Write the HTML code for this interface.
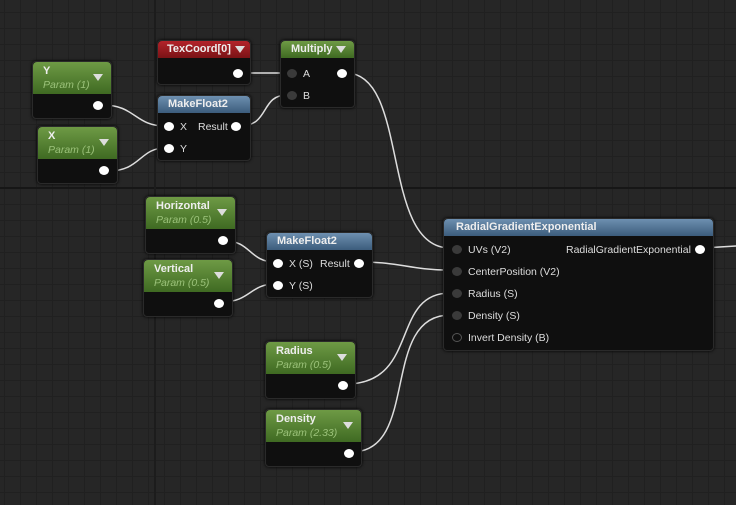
<!DOCTYPE html><html><head><style>
body{margin:0;width:736px;height:505px;overflow:hidden;background:#262626;font-family:"Liberation Sans",sans-serif;position:relative}
.bg{position:absolute;inset:0;background-image:linear-gradient(#202020 1px,transparent 1px),linear-gradient(90deg,#202020 1px,transparent 1px);background-size:16px 16px;background-position:4px 12px}
.n{position:absolute;background:#0f0f0f;border-radius:4px;box-shadow:0 0 3px #000;border:1px solid #2a2a2a}
.h{height:17px;border-radius:4px 4px 0 0;color:#eee;font-size:11px;font-weight:bold;line-height:17px;padding-left:10px;position:relative}
.red{background:linear-gradient(#b3232a,#7a1316)}
.grn{background:linear-gradient(#6e9a45,#3f6a22)}
.blu{background:linear-gradient(#6d8fb0,#3c5c7c)}
.tri{position:absolute;right:8px;top:5px;width:0;height:0;border-left:5px solid transparent;border-right:5px solid transparent;border-top:7px solid #ddd}
.pm{height:32px;line-height:14px;padding-top:2px;box-sizing:border-box}
.pm i{display:block;color:#9bc27a;font-size:10.5px;font-weight:normal}
.t{position:absolute;color:#ddd;font-size:10.5px}
.p{position:absolute;width:10px;height:9px;border-radius:50%;background:#fff}
.e{background:#3a3a3a}
svg{position:absolute;left:0;top:0}
</style></head><body><div class="bg"></div>
<div style="position:absolute;left:0;right:0;top:187px;height:2px;background:#161616"></div>
<div style="position:absolute;top:0;bottom:0;left:154px;width:2px;background:#1c1c1c"></div>
<svg width="736" height="505" fill="none" stroke="#ddd" stroke-width="1.5">
<path d="M243 73 L287 73"/>
<path d="M346 73 C410 73 380 248 450 248"/>
<path d="M103 105 C135 105 135 126 165 126"/>
<path d="M109 171 C140 171 140 148 165 148"/>
<path d="M240 126 C270 126 260 95 287 95"/>
<path d="M226 241 C250 241 250 262 275 262"/>
<path d="M222 302 C250 302 250 284 275 284"/>
<path d="M362 262 C400 262 410 270 450 270"/>
<path d="M346 384 C420 384 390 293 450 293"/>
<path d="M352 452 C420 452 380 315 450 315"/>
<path d="M703 248 L736 246"/>
</svg>
<div class="n" style="left:157px;top:40px;width:92px;height:43px"><div class="h red" style="padding-left:9px">TexCoord[0]<span class="tri" style="right:5px"></span></div><span class="p" style="left:75px;top:28px"></span></div>
<div class="n" style="left:280px;top:40px;width:73px;height:66px"><div class="h grn">Multiply<span class="tri"></span></div><span class="p e" style="left:6px;top:28px"></span><span class="t" style="left:22px;top:27px">A</span><span class="p" style="left:56px;top:28px"></span><span class="p e" style="left:6px;top:50px"></span><span class="t" style="left:22px;top:49px">B</span></div>
<div class="n" style="left:32px;top:61px;width:78px;height:56px"><div class="h grn pm">Y<i>Param (1)</i><span class="tri" style="top:12px"></span></div><span class="p" style="left:60px;top:39px"></span></div>
<div class="n" style="left:37px;top:126px;width:79px;height:56px"><div class="h grn pm">X<i>Param (1)</i><span class="tri" style="top:12px"></span></div><span class="p" style="left:61px;top:39px"></span></div>
<div class="n" style="left:157px;top:95px;width:92px;height:64px"><div class="h blu">MakeFloat2</div><span class="p" style="left:6px;top:26px"></span><span class="t" style="left:22px;top:25px">X</span><span class="t" style="left:40px;top:25px">Result</span><span class="p" style="left:73px;top:26px"></span><span class="p" style="left:6px;top:48px"></span><span class="t" style="left:22px;top:47px">Y</span></div>
<div class="n" style="left:145px;top:196px;width:89px;height:56px"><div class="h grn pm">Horizontal<i>Param (0.5)</i><span class="tri" style="top:12px"></span></div><span class="p" style="left:72px;top:39px"></span></div>
<div class="n" style="left:143px;top:259px;width:88px;height:56px"><div class="h grn pm">Vertical<i>Param (0.5)</i><span class="tri" style="top:12px"></span></div><span class="p" style="left:70px;top:39px"></span></div>
<div class="n" style="left:266px;top:232px;width:105px;height:64px"><div class="h blu">MakeFloat2</div><span class="p" style="left:6px;top:26px"></span><span class="t" style="left:22px;top:25px">X (S)</span><span class="t" style="left:53px;top:25px">Result</span><span class="p" style="left:87px;top:26px"></span><span class="p" style="left:6px;top:48px"></span><span class="t" style="left:22px;top:47px">Y (S)</span></div>
<div class="n" style="left:443px;top:218px;width:269px;height:131px"><div class="h blu" style="padding-left:12px">RadialGradientExponential</div>
<span class="p e" style="left:8px;top:26px"></span><span class="t" style="left:24px;top:25px">UVs (V2)</span><span class="t" style="left:122px;top:25px">RadialGradientExponential</span><span class="p" style="left:251px;top:26px"></span>
<span class="p e" style="left:8px;top:48px"></span><span class="t" style="left:24px;top:47px">CenterPosition (V2)</span>
<span class="p e" style="left:8px;top:70px"></span><span class="t" style="left:24px;top:69px">Radius (S)</span>
<span class="p e" style="left:8px;top:92px"></span><span class="t" style="left:24px;top:91px">Density (S)</span>
<span class="p" style="left:8px;top:114px;background:none;border:1px solid #555;width:8px;height:7px"></span><span class="t" style="left:24px;top:113px">Invert Density (B)</span></div>
<div class="n" style="left:265px;top:341px;width:89px;height:56px"><div class="h grn pm">Radius<i>Param (0.5)</i><span class="tri" style="top:12px"></span></div><span class="p" style="left:72px;top:39px"></span></div>
<div class="n" style="left:265px;top:409px;width:95px;height:56px"><div class="h grn pm">Density<i>Param (2.33)</i><span class="tri" style="top:12px"></span></div><span class="p" style="left:78px;top:39px"></span></div>
</body></html>
